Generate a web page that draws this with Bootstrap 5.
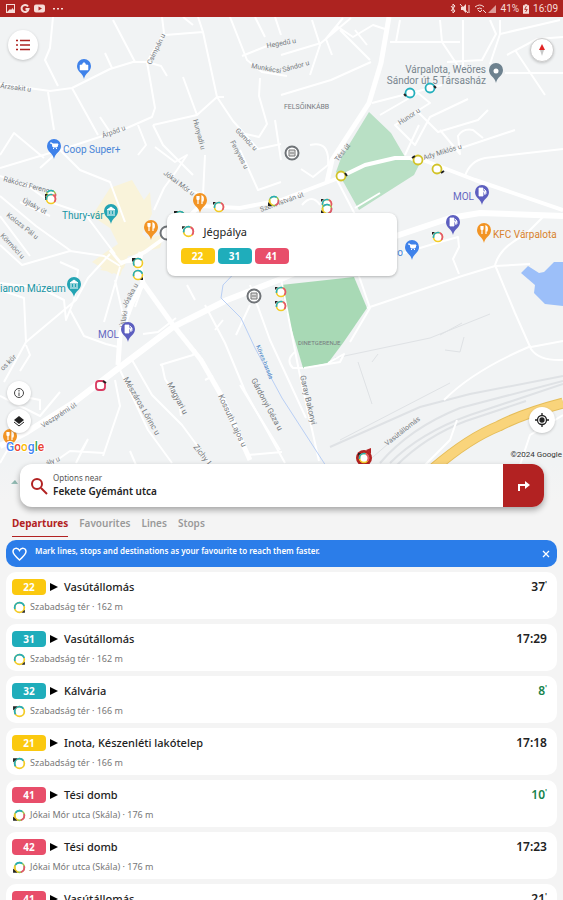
<!DOCTYPE html>
<html lang="en">
<head>
<meta charset="utf-8">
<meta name="viewport" content="width=device-width, initial-scale=1">
<title>Departures</title>
<link href="https://cdn.jsdelivr.net/npm/bootstrap@5.3.0/dist/css/bootstrap.min.css" rel="stylesheet">
<style>
  :root { --brand: #b22222; --teal: #1fadbb; --sun: #fbc90f; --rose: #e84e6a; }
  body { background: #f4f4f4; font-family: "Noto Sans", "Open Sans", sans-serif; font-size: 11px; line-height: 16px; color: #222; }
  .statusbar { background: #ad2320; height: 17px; padding: 0 5px; font: 10px/17px Roboto, sans-serif; color: #f6dcd8; }
  .mapbox { height: 483px; background: #f1f3f4; }
  .mapbox > svg { width: 100%; height: 100%; display: block; }
  .mapbox text { font-family: Roboto, sans-serif; }
  .round { width: 24px; height: 24px; padding: 0; border: 0; border-radius: 50%; background: #fff; box-shadow: 0 1px 3px #0003; position: absolute; display: flex; align-items: center; justify-content: center; }
  .at-menu { width: 30px; height: 30px; left: 8px; top: 13px; }
  .at-compass { right: 9px; top: 21px; border: 1px solid #ccc; }
  .at-info { left: 7px; bottom: 95px; }
  .at-layers { left: 7px; bottom: 67px; }
  .at-locate { width: 26px; height: 26px; right: 8px; bottom: 67px; }
  .popup { position: absolute; left: 50%; top: 196px; width: 230px; margin-left: -115px; padding: 10px 14px 12px; border-radius: 8px; background: #fff; box-shadow: 0 1px 3px #0004; }
  .line-set { gap: 3px; }
  .line-no { display: inline-block; width: 34px; height: 16px; border-radius: 4px; color: #fff; font-size: 10px; line-height: 16px; font-weight: 700; text-align: center; }
  .sun { background: var(--sun); } .teal { background: var(--teal); } .rose { background: var(--rose); }
  .sheet { margin-top: -36px; position: relative; min-height: 0; }
  .searchbar { margin: 0 19px 0 20px; height: 43px; border-radius: 12px; background: #fff; box-shadow: 0 3px 6px #0005; overflow: hidden; flex: none; }
  .searchbar .glass { padding: 0 3px 0 8px; }
  .searchbar label { font-size: 8px; line-height: 10px; color: #555; }
  .searchbar input { border: 0; padding: 0; outline: 0; font-size: 10px; line-height: 16px; font-weight: 600; color: #222; background: none; }
  .go { width: 41px; border: 0; background: var(--brand); }
  .tabs { padding: 8px 12px 0; gap: 11px; }
  .tabs button { border: 0; border-bottom: 1px solid transparent; padding: 0 0 5px; background: none; color: #999; font-size: 10px; font-weight: 600; line-height: 16px; }
  .tabs button.active { color: var(--brand); border-color: var(--brand); font-weight: 700; }
  .tip { margin: 3px 6px 5px; height: 27px; padding: 0 6px; border-radius: 10px; background: #2b7de9; color: #fff; font-size: 8px; font-weight: 600; }
  .tip p { line-height: 22px; align-self: flex-start; }
  .tip button { border: 0; padding: 0; background: none; line-height: 0; width: 10px; }
  .departures { padding: 0 6px; gap: 5px; }
  .departures li { flex: none; background: #fff; border-radius: 10px; height: 47px; padding: 7px 10px 0 6px; }
  .departures .dest { font-weight: 500; }
  .departures .when { font-size: 12px; font-weight: 600; color: #222; }
  .departures .live { color: #16834c; }
  .departures .stop { font-size: 9px; line-height: 18px; color: #777; padding-top: 3px; gap: 3px; }
  sup { font-size: 8px; }
</style>
<script src="https://cdn.jsdelivr.net/npm/bootstrap@5.3.0/dist/js/bootstrap.bundle.min.js"></script>
</head>
<body>
<svg width="0" height="0" class="position-absolute" aria-hidden="true">
  <defs>
    <symbol id="ring" viewBox="-7 -7 14 14" overflow="visible">
      <circle r="4.500" fill="#fff" stroke="#f3cb25" stroke-width="1.600"/>
      <circle r="4.500" fill="none" stroke="#24adba" stroke-width="1.600" pathLength="100" stroke-dasharray="34 66" stroke-dashoffset="-47"/>
      <circle r="4.500" fill="none" stroke="#e4556e" stroke-width="1.600" pathLength="100" stroke-dasharray="30 70" stroke-dashoffset="18"/>
      <path d="M-6-5h3l-3 3z" fill="#222"/>
    </symbol>
    <symbol id="ring2" viewBox="-7 -7 14 14" overflow="visible">
      <circle r="4.500" fill="#fff" stroke="#f3cb25" stroke-width="1.600"/>
      <circle r="4.500" fill="none" stroke="#24adba" stroke-width="1.600" pathLength="100" stroke-dasharray="50 50" stroke-dashoffset="-45"/>
      <path d="M5 5H2l3-3z" fill="#222"/>
    </symbol>
    <symbol id="ring3" viewBox="-7 -7 14 14" overflow="visible">
      <circle r="4.500" fill="#fff" stroke="#f3cb25" stroke-width="1.600"/>
      <circle r="4.500" fill="none" stroke="#24adba" stroke-width="1.600" pathLength="100" stroke-dasharray="50 50" stroke-dashoffset="-40"/>
      <path d="M-6-5h4l-4 4z" fill="#222"/>
    </symbol>
    <symbol id="ring4" viewBox="-7 -7 14 14" overflow="visible">
      <circle r="4.500" fill="#fff" stroke="#9fc54c" stroke-width="1.600"/>
      <circle r="4.500" fill="none" stroke="#24adba" stroke-width="1.600" pathLength="100" stroke-dasharray="25 75" stroke-dashoffset="-60"/>
      <circle r="4.500" fill="none" stroke="#e4556e" stroke-width="1.600" pathLength="100" stroke-dasharray="25 75" stroke-dashoffset="5"/>
      <circle r="4.500" fill="none" stroke="#f3cb25" stroke-width="1.600" pathLength="100" stroke-dasharray="25 75" stroke-dashoffset="-30"/>
      <path d="M-6 5h4l-4-4z" fill="#222"/>
    </symbol>
    <path id="pin" d="M0 0C-1-6-7-7-7-13A7 7 0 1 1 7-13C7-7 1-6 0 0z"/>
    <g id="fork" fill="none" stroke="#fff" stroke-width="1.2"><path d="M-3-17v3q1 2 2 0v-3M-2-17v8M2-9v-8q2 1 1 5h-1"/></g>
    <path id="cart" d="M-4-16h2l1 4h4l1-3h-6M-1-10.500h1M2-10.500h1" fill="#fff" stroke="#fff"/>
    <path id="fuel" d="M-3-9v-8h4v8zM1-14l2 1v3M2-16l2 2v3" fill="#fff" stroke="#fff" stroke-width=".8"/>
    <path id="museum" d="M-4-14l4-3 4 3zM-3-13v3M0-13v3M3-13v3M-4-9h8" fill="#fff" stroke="#fff"/>
  </defs>
</svg>

<div class="vh-100 d-flex flex-column overflow-hidden">
  <header class="statusbar d-flex align-items-center justify-content-between flex-shrink-0">
    <svg width="62" height="13" viewBox="0 0 62 13" fill="#f6dcd8" aria-label="Notifications" role="img">
      <path d="M1 2h9v9H1zm1 1v7l3-3 1 1 1.500-2L9 8V3z" fill-rule="evenodd"/>
      <path d="M23 4.500A3.500 3.500 0 1 0 23.500 7H20.500" fill="none" stroke="#f6dcd8" stroke-width="2"/>
      <path d="M31 2.500h7q2 0 2 2v4q0 2-2 2h-7q-2 0-2-2v-4q0-2 2-2zm2.500 2v4L37 6.500z" fill-rule="evenodd"/>
      <path d="M48 6h2v1.500h-2zM52 6h2v1.500h-2zM56 6h2v1.500h-2z"/>
    </svg>
    <div class="d-flex align-items-center gap-1">
      <svg width="47" height="12" viewBox="0 0 47 12" fill="#f6dcd8" aria-hidden="true">
        <path d="M1 3l4 5-2 2V1l2 2-4 5" fill="none" stroke="#f6dcd8"/>
        <path d="M11 4h2l3-3v9l-3-3h-2z"/><path d="M10 1l8 9M19 2v8" stroke="#f6dcd8"/>
        <path d="M25 4q5-4 9 0M27 6q3-2 5 0M28 7l2 2 2-2M33 7l3 3" fill="none" stroke="#f6dcd8"/>
        <path d="M38 10l8-8v8z" opacity=".65"/>
      </svg>
      <span>41%</span>
      <svg width="6" height="10" viewBox="0 0 7 11" aria-hidden="true"><path d="M2 0h3v1h2v10H0V1h2z" fill="#f6dcd8"/><path d="M4 2L2 6h3L3 9" fill="none" stroke="#ad2320"/></svg>
      <span>16:09</span>
    </div>
  </header>

  <section class="mapbox position-relative flex-shrink-0" aria-label="Map">
    <svg viewBox="0 17 563 483" preserveAspectRatio="xMidYMid slice">
      <defs><linearGradient id="fade" x2="0" y2="1"><stop stop-color="#f4f4f4" stop-opacity="0"/><stop offset="1" stop-color="#f4f4f4"/></linearGradient></defs>
      <rect y="17" width="563" height="490" fill="#f1f3f4"/>
      <!-- built-up centre -->
      <path d="M110 188l22-8 12 20 6-8 2 22-10 20 10 8-6 12-18 2-4 12-12 6-20-12 14-10 12-8-8-16-18-12z" fill="#f9f3da"/>
      <path d="M150 238l14-4-4 14-18 4zM108 262l16 2-4 12-8-4-12-2z" fill="#f9f3da"/>
      <!-- parks and lake -->
      <path d="M369 112l22 21 14 24 14 8-5 10-55 35-15-27-8-11 5-14z" fill="#b9e0c5"/>
      <path d="M281 285l73-8 13 31-24 35-15 20-25 5-17-58z" fill="#a8d9b5"/>
      <path d="M521 273l7-7 11 7 5-1 10-10h9v44l-18-2-11-11 1-8z" fill="#9cbff9"/>
      <!-- railway -->
      <g fill="none" stroke="#dfe2e5">
        <path d="M330 447l90-40 50-13 93-18M380 463q30-35 80-55l103-27M390 463q30-30 80-48l93-31M396 466q30-30 70-45l60-20" stroke-width="2"/>
        <path d="M335 358l95-20 60-24M358 362l14 42M440 335l22-12M372 362l6-8M445 350l15 2 4-15M340 440l110-57M366 463l30-26"/>
      </g>
      <!-- minor streets -->
      <g fill="none" stroke="#fff" stroke-width="2" stroke-linejoin="round">
        <path d="M53 17l-3 31-5 12 13 26M0 84l50 7 22-3 38-19 23-7h14l14 4 6 10M113 20l22 42M105 53l7 15M162 17l2 16-17 29 8 46-3 9-25 11-67 22M165 35l38-3M198 17l5 15 14 65-20 18-44 10M183 77l14 38M48 92l6 38M72 88l26 47M230 17l17 43 15 12 25 4M242 56l25-10M260 78l-1 18 8 28-8 13-18-4M217 97l16 24 25 28 23-5M217 97h7"/>
        <path d="M0 155l14-22 24 20M14 133l30 25M0 168l60-18M60 150l20 20 30 12 15 40M60 150l-20 18M138 125l8 20-8 10M153 125l10 20 30 30M155 147l20 15 12-7-10 15-13 18-10 22M100 117l10 15M205 155l-2 40-20-7M240 150l18 40 23-8M275 120l6 40"/>
        <path d="M0 176l28 10 22 16 35 12 30 40M20 202l30 14M0 196l36 30 35 25M0 216l30 40M0 245l22 20 48-14 34 5 16 10M60 262l18 8-4 30-8 20-2-20-24-12-40-5M70 310l14 26 22 8 12 3M0 290l24 8 2 44-22 40M26 342l50-42 12-22 22-24M26 345l4 10-10 16M120 267l-16 55M115 280l8 35M143 285l-8 22"/>
        <path d="M120 370l28 60 24 33M132 360l20 35 30 30 28 38M115 380l5 26-17 50M80 453l8-14M76 463l12-24M0 396l40 20 20-24M40 410l0-10-20-4M160 365l33-10 2-6M162 365l3 14 14 22 2 15M205 305l20 38 20 48 40 72M215 330l8-10M205 380l8-4M0 463l8-14M50 465l20-14 34 2M130 451l6 14M248 455l34-3M143 334l15-2 18-14M195 300l-8-15"/>
        <path d="M250 285l20 55 36 78M236 335l14-30M281 279l18 92 20 90M240 385l40 65"/>
        <path d="M281 55l40-12 30-25M325 40l18-22M332 55l-6-16 12-12 15 10 20-12 12 4M340 30l30 30M355 30l12 15M281 95l50-15 40-18M312 20l8 25-10 30M390 42h70M400 20l-4 22M440 20l2 22 20 30M463 20v50M490 20l6 14-14 26-35 2M500 20v14l60-14M500 34l-10 30M507 55l30-16 26-2M515 50l30 45M505 73h58M372 103l70-18M380 115l38-22 12 10-35 22 20 20 15-28 38-18M418 112l20 20 40-12 10-10M405 155l14-30M440 130l20 24-2-18q5-8 15-6l10 8M455 150l60-20M465 176q5-15 20-18l78-9"/>
        <path d="M310 145q20-5 18 20l-15 12-12-8M302 205q10-12 18 0M336 178l25 48M355 208l25-15M350 250l20 58-20 34M367 308l95-32 33-10 35-2M400 254l40-12 18-5 1 10-6 12 6 15M495 265q5-18 30-30l20-20M495 265l20 48 16 36q8 12 32 11M531 347l32-6M444 400q30-30 87-54M425 465l25-25 7-20M303 368h-10q-8-8 2-16M328 363l16-9-4 8-36 6"/>
        <path d="M183 17l10 8M255 17l10 20M275 17l6 18M520 465l10-30 33-20"/>
      </g>
      <!-- main roads -->
      <g fill="none" stroke="#fff" stroke-linejoin="round">
        <path d="M389 17l-8 46-12 40-26 40-11 17-5 22" stroke-width="5"/>
        <path d="M0 446l27-14 46-29 47-36 53-40 54-27 54-21 59-26 56-17 54-18 30-5 83 3" stroke-width="6"/>
        <path d="M200 206l40 2 41-8 55-21 29-14 30-7h15l13 2 52 20 88 30M120 264l25-12 25-18 30-28" stroke-width="4"/>
        <path d="M118 365l2-30 12-32 11-20-4-20 2-11M143 283l30 42 28 35 20 35 29 65" stroke-width="5"/>
        <path d="M110 250l10 12 22-1" stroke-width="3"/>
      </g>
      <path d="M434 468q35-30 65-42 25-13 64-23" fill="none" stroke="#e5bd59" stroke-width="11"/>
      <path d="M434 468q35-30 65-42 25-13 64-23" fill="none" stroke="#f9d47b" stroke-width="9"/>
      <path d="M247 260l-24 25-2 13 20 20 14 30 27 50 44 68" fill="none" stroke="#b9cff5"/>
      <!-- street names -->
      <g fill="#777b80" font-size="7">
        <text transform="translate(0 88) rotate(7)">Árzsakit u</text>
        <text transform="translate(151 65) rotate(-64)">Csimpán u</text>
        <text transform="translate(103 138) rotate(-20)">Árpád u</text>
        <text transform="translate(193 120) rotate(75)">Hunyadi u</text>
        <text transform="translate(235 131) rotate(46)">Gömöz u</text>
        <text transform="translate(230 142) rotate(62)">Fenyves u</text>
        <text transform="translate(251 68) rotate(10)">Munkácsi</text>
        <text transform="translate(267 48) rotate(-10)">Hegedű u</text>
        <text transform="translate(283 72) rotate(-15)">Sándor u</text>
        <text transform="translate(163 174) rotate(37)">Jókai Mór u</text>
        <text transform="translate(261 212) rotate(-20)">Szent István út</text>
        <text transform="translate(338 162) rotate(-52)">Tési út</text>
        <text transform="translate(400 125) rotate(-33)">Hunor u</text>
        <text transform="translate(424 160) rotate(-17)">Ady Miklós u</text>
        <text transform="translate(3 181) rotate(15)">Rákóczi Ferenc</text>
        <text transform="translate(22 202) rotate(28)">Újlaky út</text>
        <text transform="translate(6 216) rotate(38)">Kolozs Pál u</text>
        <text transform="translate(0 236) rotate(47)">Körmöci u</text>
        <text transform="translate(126 308) rotate(-62)">Jósika u</text>
        <text transform="translate(125 328) rotate(-82)">Újlaki</text>
        <text transform="translate(3 371) rotate(-45)">os kör</text>
        <text transform="translate(43 428) rotate(-33)">Veszprémi út</text>
        <text transform="translate(123 379) rotate(60)" font-size="8">Mészáros Lőrinc u</text>
        <text transform="translate(167 384) rotate(62)" font-size="8">Magyari u</text>
        <text transform="translate(218 396) rotate(65)" font-size="8">Kossuth Lajos u</text>
        <text transform="translate(193 447) rotate(52)" font-size="8">Zichy I</text>
        <text transform="translate(251 380) rotate(62)" font-size="8">Gárdonyi Géza u</text>
        <text transform="translate(300 376) rotate(77)" font-size="8">Garay Bakonyi</text>
        <text transform="translate(387 446) rotate(-38)">Vasútállomás</text>
        <text transform="translate(47 466) rotate(-22)">ály u</text>
        <text transform="translate(256 346) rotate(68)" fill="#3f7fc4" font-size="6">Köves-harsda</text>
        <text x="284" y="109">FELSŐINKÁBB</text>
        <text x="298" y="345" font-size="6">DINETGERENJE</text>
      </g>
      <!-- places -->
      <g font-size="10">
        <use href="#pin" x="84" y="79" fill="#3f82ea"/><path d="M80 65h8v5h-8zM82 65q2-5 4 0" fill="#fff" stroke="#fff" stroke-width=".5"/>
        <use href="#pin" x="54" y="159" fill="#3f82ea"/><use href="#cart" x="54" y="159"/><text x="63" y="153" fill="#4a86d8">Coop Super+</text>
        <use href="#pin" x="111" y="224" fill="#24a4b3"/><use href="#museum" x="111" y="224"/><text x="62" y="219" fill="#1895a4">Thury-vár</text>
        <use href="#pin" x="74" y="297" fill="#24a4b3"/><use href="#museum" x="74" y="297"/><text x="0" y="292" fill="#1895a4">ianon Múzeum</text>
        <use href="#pin" x="200" y="213" fill="#f29424"/><use href="#fork" x="200" y="213"/>
        <use href="#pin" x="151" y="240" fill="#f29424"/><use href="#fork" x="151" y="240"/>
        <use href="#pin" x="484" y="243" fill="#f29424"/><use href="#fork" x="484" y="243"/><text x="493" y="238" fill="#d8822c">KFC Várpalota</text>
        <use href="#pin" x="482" y="205" fill="#5d5fc0"/><use href="#fuel" x="482" y="205"/><text x="453" y="200" fill="#6568c2">MOL</text>
        <use href="#pin" x="453" y="235" fill="#5d5fc0"/><use href="#fuel" x="453" y="235"/>
        <use href="#pin" x="128" y="342" fill="#5d5fc0"/><use href="#fuel" x="128" y="342"/><text x="98" y="338" fill="#6568c2">MOL</text>
        <use href="#pin" x="412" y="260" fill="#3f82ea"/><use href="#cart" x="412" y="260"/><text x="403" y="256" text-anchor="end" fill="#4a86d8">co</text>
        <use href="#pin" x="496" y="83" fill="#6e828f"/><circle cx="496" cy="71" r="2.500" fill="#fff"/>
        <text text-anchor="end" fill="#78858e"><tspan x="486" y="73">Várpalota, Weöres</tspan><tspan x="486" y="84">Sándor út 5 Társasház</tspan></text>
        <g fill="#fff" stroke="#6f7377" stroke-width="2"><circle cx="292" cy="153" r="6.500"/><circle cx="254" cy="296" r="6.500"/><circle cx="167" cy="233" r="6.500"/></g>
        <path d="M289 150h6v6h-6zM290 153h4M251 293h6v6h-6zM252 296h4" fill="#ddd" stroke="#777"/>
        <use href="#pin" x="10" y="449" fill="#f29424"/><use href="#fork" x="10" y="449"/>
      </g>
      <!-- bus stops -->
      <g>
        <g fill="#fff" stroke="#25b0bd" stroke-width="1.800"><circle cx="410" cy="93" r="4.500"/><circle cx="430" cy="88" r="4.500"/></g>
        <path d="M404 94l2 2M434 86l2 2" stroke="#222" stroke-width="2"/>
        <g fill="#fff" stroke="#d2c328" stroke-width="1.800"><circle cx="341" cy="176" r="4.500"/><circle cx="418" cy="160" r="4.500"/><circle cx="437" cy="169" r="4.500"/></g>
        <path d="M345 173l2 3M412 158l3-2M441 173l3-2" stroke="#222" stroke-width="2"/>
        <use href="#ring4" x="44" y="188" width="14" height="14"/><use href="#ring" x="44" y="192" width="14" height="14"/>
        <use href="#ring" x="212" y="200" width="14" height="14"/><use href="#ring4" x="267" y="194" width="14" height="14"/>
        <use href="#ring" x="320" y="197" width="14" height="14"/><use href="#ring4" x="320" y="202" width="14" height="14"/>
        <use href="#ring3" x="173" y="209" width="14" height="14"/>
        <use href="#ring3" x="131" y="256" width="14" height="14"/><use href="#ring2" x="131" y="268" width="14" height="14"/>
        <use href="#ring" x="431" y="230" width="14" height="14"/><use href="#ring" x="274" y="285" width="14" height="14"/><use href="#ring" x="274" y="299" width="14" height="14"/>
        <rect x="96" y="381" width="9" height="9" rx="3" fill="#fff" stroke="#d93a60" stroke-width="1.800"/><path d="M103 381l3 2" stroke="#222" stroke-width="2"/>
        <path d="M366 450l5-2v6z" fill="#b22222"/><circle cx="364" cy="458" r="8" fill="#b22222"/><use href="#ring" x="357" y="451" width="14" height="14"/>
        <path d="M11 484l4-4 3 4z" fill="#287b6c"/>
      </g>
      <text x="6" y="451" font-size="12" font-weight="500" stroke="#fff" stroke-width="2" paint-order="stroke"><tspan fill="#4285f4">G</tspan><tspan fill="#ea4335">o</tspan><tspan fill="#fbbc05">o</tspan><tspan fill="#4285f4">g</tspan><tspan fill="#34a853">l</tspan><tspan fill="#ea4335">e</tspan></text>
      <text x="562" y="457" font-size="8" text-anchor="end" fill="#333">©2024 Google</text>
      <rect y="464" width="563" height="36" fill="url(#fade)"/>
    </svg>

    <button class="round at-menu" aria-label="Menu"><svg width="14" height="12" stroke="#ad2320" stroke-width="1.500"><path d="M0 1.500h2M4 1.500h10M0 6h2M4 6h10M0 10.500h2M4 10.500h10"/></svg></button>
    <button class="round at-compass" aria-label="Compass"><svg width="8" height="14"><path d="M4 1l3 6H1z" fill="#e02424"/><path d="M2 7h4l-2 6z" fill="#c8c8c8"/></svg></button>
    <button class="round at-info" aria-label="Information"><svg width="12" height="12" fill="none" stroke="#444"><circle cx="6" cy="6" r="4.500"/><path d="M6 5.500V9M6 3v1.500"/></svg></button>
    <button class="round at-layers" aria-label="Layers"><svg width="12" height="12" fill="#222"><path d="M6 1l5 4-5 4-5-4z"/><path d="M1 7l5 4 5-4" fill="none" stroke="#222"/></svg></button>
    <button class="round at-locate" aria-label="My location"><svg width="14" height="14" fill="none" stroke="#222" stroke-width="1.300"><circle cx="7" cy="7" r="4.500"/><circle cx="7" cy="7" r="2" fill="#222"/><path d="M7 0v3M7 11v3M0 7h3M11 7h3"/></svg></button>

    <div class="popup">
      <div class="d-flex align-items-center gap-2 mb-2">
        <svg width="15" height="17"><use href="#ring"/></svg><span>Jégpálya</span>
      </div>
      <div class="line-set d-flex"><span class="line-no sun">22</span><span class="line-no teal">31</span><span class="line-no rose">41</span></div>
    </div>
  </section>

  <main class="sheet d-flex flex-column flex-grow-1">
    <form class="searchbar d-flex align-items-stretch">
      <div class="glass d-flex align-items-center"><svg width="22" height="22" viewBox="0 0 22 22" fill="none" stroke="#b22222" stroke-width="2"><circle cx="9" cy="9" r="5"/><path d="M13 13l6 6"/></svg></div>
      <div class="d-flex flex-column flex-grow-1 justify-content-center">
        <label for="near">Options near</label>
        <input id="near" type="text" value="Fekete Gyémánt utca">
      </div>
      <button class="go" type="button" aria-label="Directions"><svg width="14" height="13" viewBox="0 0 14 13"><path d="M2 11V5h7" fill="none" stroke="#fff" stroke-width="2"/><path d="M8 1l5 4-5 4z" fill="#fff"/></svg></button>
    </form>

    <nav class="tabs d-flex flex-shrink-0" aria-label="Sections">
      <button class="active" type="button">Departures</button>
      <button type="button">Favourites</button>
      <button type="button">Lines</button>
      <button type="button">Stops</button>
    </nav>

    <div class="tip d-flex align-items-center gap-2 flex-shrink-0">
      <svg width="15" height="14" viewBox="0 0 15 14"><path d="M7.500 13C3 9 1 7 1 4.500 1 1 5.500 0 7.500 3.500 9.500 0 14 1 14 4.500 14 7 12 9 7.500 13z" fill="none" stroke="#fff" stroke-width="1.500"/></svg>
      <p class="mb-0 flex-grow-1">Mark lines, stops and destinations as your favourite to reach them faster.</p>
      <button type="button" aria-label="Close"><svg width="8" height="8"><path d="M1 1l6 6M7 1L1 7" stroke="#fff" stroke-width="1.300"/></svg></button>
    </div>

    <ul class="departures list-unstyled d-flex flex-column mb-0 flex-grow-1 overflow-hidden">
      <li><div class="d-flex align-items-center gap-1"><span class="line-no sun">22</span><svg width="10" height="10"><path d="M0 1l8 4-8 4z"/></svg><span class="dest flex-grow-1">Vasútállomás</span><span class="when">37<sup>'</sup></span></div>
        <div class="stop d-flex align-items-center"><svg width="15" height="15"><use href="#ring2"/></svg>Szabadság tér · 162 m</div></li>
      <li><div class="d-flex align-items-center gap-1"><span class="line-no teal">31</span><svg width="10" height="10"><path d="M0 1l8 4-8 4z"/></svg><span class="dest flex-grow-1">Vasútállomás</span><span class="when">17:29</span></div>
        <div class="stop d-flex align-items-center"><svg width="15" height="15"><use href="#ring2"/></svg>Szabadság tér · 162 m</div></li>
      <li><div class="d-flex align-items-center gap-1"><span class="line-no teal">32</span><svg width="10" height="10"><path d="M0 1l8 4-8 4z"/></svg><span class="dest flex-grow-1">Kálvária</span><span class="when live">8<sup>'</sup></span></div>
        <div class="stop d-flex align-items-center"><svg width="15" height="15"><use href="#ring3"/></svg>Szabadság tér · 166 m</div></li>
      <li><div class="d-flex align-items-center gap-1"><span class="line-no sun">21</span><svg width="10" height="10"><path d="M0 1l8 4-8 4z"/></svg><span class="dest flex-grow-1">Inota, Készenléti lakótelep</span><span class="when">17:18</span></div>
        <div class="stop d-flex align-items-center"><svg width="15" height="15"><use href="#ring3"/></svg>Szabadság tér · 166 m</div></li>
      <li><div class="d-flex align-items-center gap-1"><span class="line-no rose">41</span><svg width="10" height="10"><path d="M0 1l8 4-8 4z"/></svg><span class="dest flex-grow-1">Tési domb</span><span class="when live">10<sup>'</sup></span></div>
        <div class="stop d-flex align-items-center"><svg width="15" height="15"><use href="#ring4"/></svg>Jókai Mór utca (Skála) · 176 m</div></li>
      <li><div class="d-flex align-items-center gap-1"><span class="line-no rose">42</span><svg width="10" height="10"><path d="M0 1l8 4-8 4z"/></svg><span class="dest flex-grow-1">Tési domb</span><span class="when">17:23</span></div>
        <div class="stop d-flex align-items-center"><svg width="15" height="15"><use href="#ring4"/></svg>Jókai Mór utca (Skála) · 176 m</div></li>
      <li><div class="d-flex align-items-center gap-1"><span class="line-no rose">41</span><svg width="10" height="10"><path d="M0 1l8 4-8 4z"/></svg><span class="dest flex-grow-1">Vasútállomás</span><span class="when">21<sup>'</sup></span></div>
        <div class="stop d-flex align-items-center"><svg width="15" height="15"><use href="#ring4"/></svg>Jókai Mór utca (Skála) · 176 m</div></li>
    </ul>
  </main>
</div>
</body>
</html>
